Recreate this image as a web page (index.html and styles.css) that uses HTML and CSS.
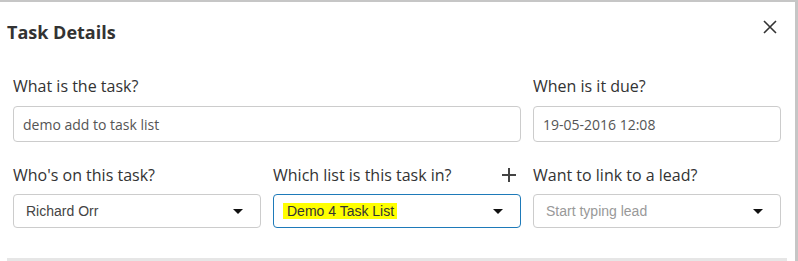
FILE: index.html
```html
<!DOCTYPE html>
<html>
<head>
<meta charset="utf-8">
<link rel="stylesheet" href="styles.css">
</head>
<body>
<div class="modal">
  <div class="modal-header">
    <h2 class="title">Task Details</h2>
    <button class="close" aria-label="Close">
      <svg width="14" height="14" viewBox="0 0 14 14"><path d="M1 1L13 13M13 1L1 13" stroke="#333" stroke-width="1.6" fill="none"/></svg>
    </button>
  </div>
  <div class="form-grid">
    <div class="field span-2">
      <label class="label">What is the task?</label>
      <div class="input">demo add to task list</div>
    </div>
    <div class="field">
      <label class="label">When is it due?</label>
      <div class="input">19-05-2016 12:08</div>
    </div>
    <div class="field row2">
      <label class="label">Who's on this task?</label>
      <div class="select"><span class="sel-text">Richard Orr</span><span class="caret"></span></div>
    </div>
    <div class="field row2">
      <div class="label label-split"><span>Which list is this task in?</span>
        <svg class="plus" width="14" height="14" viewBox="0 0 14 14"><path d="M7 0V14M0 7H14" stroke="#444" stroke-width="2" fill="none"/></svg>
      </div>
      <div class="select focused"><span class="sel-text"><span class="hl">Demo 4 Task List</span></span><span class="caret"></span></div>
    </div>
    <div class="field row2">
      <label class="label">Want to link to a lead?</label>
      <div class="select"><span class="sel-text placeholder">Start typing lead</span><span class="caret"></span></div>
    </div>
  </div>
  <div class="footer-line"></div>
</div>
</body>
</html>
```
FILE: styles.css
```css
html, body {
  margin: 0;
  padding: 0;
}
body {
  background: #c6c6c6;
  font-family: "Open Sans", "Noto Sans", sans-serif;
  color: #333;
  width: 798px;
  height: 261px;
  overflow: hidden;
}
.modal {
  background: #fff;
  margin: 2px 3px 0 0;
  height: 259px;
  display: flex;
  flex-direction: column;
}
.modal-header {
  display: flex;
  justify-content: space-between;
  align-items: center;
  padding: 18px 18px 0 7px;
  height: 24px;
}
.title {
  margin: 0;
  font-size: 18px;
  line-height: 24px;
  font-weight: 700;
  color: #333;
}
.close {
  background: none;
  border: 0;
  padding: 0;
  width: 14px;
  height: 14px;
  display: flex;
  margin-top: -11px;
}
.form-grid {
  display: grid;
  grid-template-columns: repeat(3, 248px);
  column-gap: 12px;
  row-gap: 23px;
  padding: 32px 0 0 13px;
}
.span-2 {
  grid-column: span 2;
}
.field {
  display: flex;
  flex-direction: column;
}
.label {
  font-size: 16px;
  line-height: 20px;
  color: #333;
  margin-bottom: 10px;
}
.row2 .label {
  margin-bottom: 9px;
}
.label-split {
  display: flex;
  justify-content: space-between;
  align-items: center;
}
.plus {
  margin-right: 5px;
}
.input {
  height: 36px;
  box-sizing: border-box;
  border: 1px solid #ccc;
  border-radius: 4px;
  padding: 0 9px;
  display: flex;
  align-items: center;
  font-size: 14px;
  color: #555;
}
.select {
  height: 34px;
  box-sizing: border-box;
  border: 1px solid #ccc;
  border-radius: 4px;
  padding: 0 17px 0 12px;
  display: flex;
  align-items: center;
  justify-content: space-between;
  font-family: "Liberation Sans", Arial, sans-serif;
  font-size: 14px;
  color: #444;
}
.select.focused {
  border-color: #1e7ab9;
  padding-left: 9px;
}
.hl {
  background: #ffff00;
  padding: 0 3px 0 4px;
  line-height: 16px;
  display: inline-block;
  color: #333;
}
.placeholder {
  color: #999;
}
.caret {
  width: 0;
  height: 0;
  border-left: 5px solid transparent;
  border-right: 5px solid transparent;
  border-top: 5px solid #111;
}
.footer-line {
  margin: auto 8px 0 7px;
  height: 3px;
  background: #e6e6e6;
}
```
